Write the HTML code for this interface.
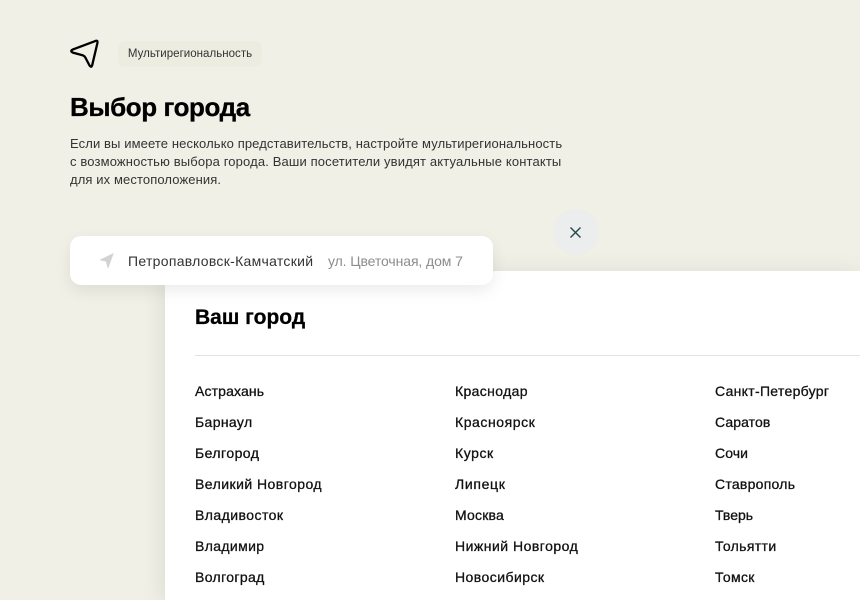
<!DOCTYPE html>
<html lang="ru">
<head>
<meta charset="utf-8">
<title>Выбор города</title>
<style>
html,body{margin:0;padding:0}
body{width:860px;height:600px;overflow:hidden;background:#f0f0e6;position:relative;font-family:"Liberation Sans",sans-serif;color:#000}
.a{position:absolute;white-space:nowrap}
.badge{left:118px;top:41px;width:144px;height:26px;background:#ececE1;border-radius:7px;font-size:11.5px;letter-spacing:.03px;line-height:26px;text-align:center;color:#333}
h1{margin:0;left:70px;top:90px;font-size:26px;letter-spacing:-.42px;line-height:34px;font-weight:700;-webkit-text-stroke:.3px #000}
.p{left:70px;font-size:13px;letter-spacing:.11px;line-height:18px;color:#333}
.panel{left:165px;top:271px;width:695px;height:329px;background:#fff;box-shadow:0 4px 24px rgba(0,0,0,.1)}
.card{left:70px;top:236px;width:423px;height:49px;background:#fff;border-radius:11px;box-shadow:0 6px 16px rgba(0,0,0,.08)}
.close{left:552.5px;top:209px;width:46px;height:46px;border-radius:50%;background:#ebeeec}
h2{margin:0;left:195px;top:304px;font-size:21px;line-height:28px;font-weight:700;-webkit-text-stroke:.25px #000}
.line{left:195px;top:355px;width:665px;height:1px;background:#e3e3e3}
.c{font-size:14px;letter-spacing:.36px;line-height:20px;color:#111;-webkit-text-stroke:.3px #111}
</style>
</head>
<body>
<svg class="a" style="left:68px;top:37px" width="34" height="34" viewBox="0 0 34 34" fill="none"><path d="M4.6 12.6 27.6 3.9Q30 3.2 29.5 5.6L24.2 28.2Q23.4 31 21.6 28.6L17.4 20.6Q16.6 19 15 18.4L4.8 15.6Q1.8 14 4.6 12.6Z" stroke="#000" stroke-width="2.3" stroke-linejoin="round"/></svg>
<div class="a badge">Мультирегиональность</div>
<h1 class="a">Выбор города</h1>
<div class="a p" style="top:135px">Если вы имеете несколько представительств, настройте мультирегиональность</div>
<div class="a p" style="top:153px;letter-spacing:.14px">с возможностью выбора города. Ваши посетители увидят актуальные контакты</div>
<div class="a p" style="top:171px">для их местоположения.</div>

<div class="a panel"></div>
<div class="a close"></div>
<svg class="a" style="left:569px;top:226px" width="13" height="13" viewBox="0 0 13 13" fill="none"><path d="M1.5 1.5 11.5 11.5M11.5 1.5 1.5 11.5" stroke="#1f4a48" stroke-width="1.4"/></svg>
<div class="a card"></div>
<svg class="a" style="left:99px;top:253px" width="15" height="16" viewBox="0 0 15 16"><path d="M1 7 14.3.5 9 15 7.2 8.3Z" fill="#d2d2d2" stroke="#d2d2d2" stroke-width=".6" stroke-linejoin="round"/></svg>
<div class="a" style="left:128px;top:251px;font-size:14px;letter-spacing:.29px;line-height:20px;color:#333">Петропавловск-Камчатский</div>
<div class="a" style="left:328px;top:251px;font-size:14px;letter-spacing:-.1px;line-height:20px;color:#8c8c8c">ул. Цветочная, дом 7</div>

<h2 class="a">Ваш город</h2>
<div class="a line"></div>

<div class="a c" style="left:195px;top:381px;letter-spacing:.14px">Астрахань</div>
<div class="a c" style="left:195px;top:412px">Барнаул</div>
<div class="a c" style="left:195px;top:443px;letter-spacing:.46px">Белгород</div>
<div class="a c" style="left:195px;top:474px;letter-spacing:.46px">Великий Новгород</div>
<div class="a c" style="left:195px;top:505px;letter-spacing:.45px">Владивосток</div>
<div class="a c" style="left:195px;top:536px">Владимир</div>
<div class="a c" style="left:195px;top:567px">Волгоград</div>

<div class="a c" style="left:455px;top:381px">Краснодар</div>
<div class="a c" style="left:455px;top:412px;letter-spacing:.56px">Красноярск</div>
<div class="a c" style="left:455px;top:443px;letter-spacing:.56px">Курск</div>
<div class="a c" style="left:455px;top:474px;letter-spacing:.66px">Липецк</div>
<div class="a c" style="left:455px;top:505px;letter-spacing:.2px">Москва</div>
<div class="a c" style="left:455px;top:536px;letter-spacing:.49px">Нижний Новгород</div>
<div class="a c" style="left:455px;top:567px;letter-spacing:.45px">Новосибирск</div>

<div class="a c" style="left:715px;top:381px;letter-spacing:.3px">Санкт-Петербург</div>
<div class="a c" style="left:715px;top:412px;letter-spacing:.08px">Саратов</div>
<div class="a c" style="left:715px;top:443px;letter-spacing:.1px">Сочи</div>
<div class="a c" style="left:715px;top:474px;letter-spacing:.26px">Ставрополь</div>
<div class="a c" style="left:715px;top:505px;letter-spacing:0">Тверь</div>
<div class="a c" style="left:715px;top:536px">Тольятти</div>
<div class="a c" style="left:715px;top:567px">Томск</div>
</body>
</html>
